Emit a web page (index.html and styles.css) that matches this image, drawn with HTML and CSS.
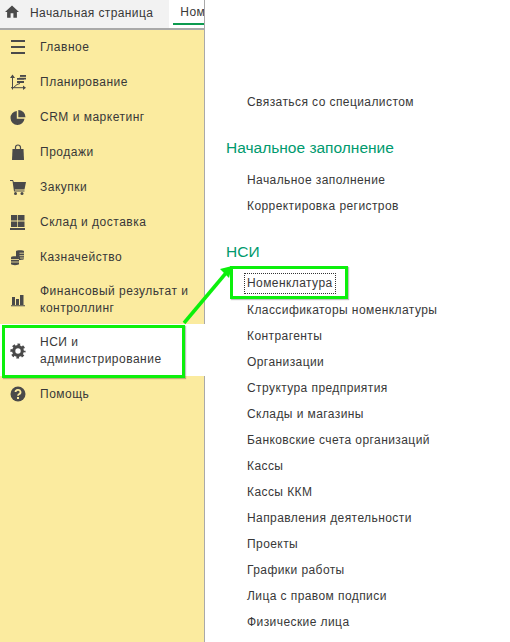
FILE: index.html
```html
<!DOCTYPE html>
<html lang="ru">

<head>
    <meta charset="UTF-8">
    <meta name="viewport" content="width=device-width, initial-scale=1.0">
    <title>Начальная страница</title>
    <link rel="stylesheet" href="styles.css">
</head>

<body>
    <div class="page">
        <div class="left">
            <div class="tabs">
                <svg class="home" viewBox="0 0 16 14"><path d="M8 0 L16 7.500 H13.600 V14 H9.600 V9 H6.400 V14 H2.400 V7.500 H0 Z" /></svg>
                <span class="tab-text">Начальная страница</span>
                <div class="tab-current"><div class="tab-label">Номенклатура</div></div>
            </div>
            <div class="menu">
                <div class="item">
                    <svg class="icon" viewBox="0 0 16 16"><path d="M1 0h14v2H1zM1 6h14v2H1zM1 12h14v2H1z" /></svg>
                    <span>Главное</span>
                </div>
                <div class="item">
                    <svg class="icon" viewBox="0 0 16 16">
                        <path d="M2.500 1.500V14.500M1 12.700H13.500M3 13l4-3.500 3-1" fill="none" stroke="#4a4a4a" stroke-width="1" />
                        <path d="M2.500 -.5L5 3H0zM16 12.700L13 10.500v4.400z" />
                        <path d="M10 0h6v2h-6zM7 3h7v2H7zM9 2.500h7v2H9zM7 6h7v2H7z" />
                        <path d="M7 5.200h7M9 2.300h7" stroke="#fbeb9f" stroke-width=".7" />
                    </svg>
                    <span>Планирование</span>
                </div>
                <div class="item">
                    <svg class="icon" viewBox="0 0 16 16"><path d="M6.800 1a7 7 0 1 0 7.700 7.700H6.800z" /><path d="M8.300 0a7.200 7.200 0 0 1 7.200 7.200H8.300z" /></svg>
                    <span>CRM и маркетинг</span>
                </div>
                <div class="item">
                    <svg class="icon" viewBox="0 0 16 16"><path d="M2.500 4h11L14 15H2z" /><path d="M5.500 6V2.500a2.500 2.500 0 0 1 5 0V6" fill="none" stroke="#4a4a4a" stroke-width="1.200" /></svg>
                    <span>Продажи</span>
                </div>
                <div class="item">
                    <svg class="icon" viewBox="0 0 16 16">
                        <path d="M0 0h3l.8 2H16l-1.500 7.500H4.800L4.900 10.500H14.500V11.500H4L2.500 1H0z" />
                        <circle cx="5.500" cy="13.500" r="1.500" />
                        <circle cx="12" cy="13.500" r="1.500" />
                    </svg>
                    <span>Закупки</span>
                </div>
                <div class="item">
                    <svg class="icon" viewBox="0 0 16 16"><path d="M1 0h6.300v5.500H1zM8 0h6.500v5.500H8zM1 6.500h6.300V12H1zM8 6.500h6.500V12H8zM0 13h15v2H0z" /></svg>
                    <span>Склад и доставка</span>
                </div>
                <div class="item">
                    <svg class="icon" viewBox="0 0 16 16">
                        <path d="M6 1.200C6 0 14 0 14 1.200V8.800C14 10 9 10 9 10V7H6z" />
                        <path d="M1 7.200C1 6 9 6 9 7.200V14C9 15.500 1 15.500 1 14z" />
                        <path d="M9.500 3.200H14M9.500 5.700H14M10 8H14M1 9.500H9M1 12H9" stroke="#fbeb9f" stroke-width=".8" fill="none" />
                    </svg>
                    <span>Казначейство</span>
                </div>
                <div class="item item-two">
                    <svg class="icon" viewBox="0 0 16 16"><path d="M2 5h3v8H2zM6 7h3v6H6zM10 3h3.500v10H10zM1 13.300h14v1H1z" /></svg>
                    <span>Финансовый результат и контроллинг</span>
                </div>
                <div class="item item-active">
                    <svg class="icon" viewBox="0 0 16 16">
                        <circle cx="8" cy="8" r="4.300" fill="none" stroke="#4a4a4a" stroke-width="3.200" />
                        <circle cx="8" cy="8" r="6.300" fill="none" stroke="#4a4a4a" stroke-width="2.600" stroke-dasharray="2.600 2.350" stroke-dashoffset="1.300" />
                    </svg>
                    <span>НСИ и<br>администрирование</span>
                </div>
                <div class="item item-last">
                    <svg class="icon" viewBox="0 0 16 16">
                        <circle cx="8" cy="8" r="7.500" />
                        <path d="M5.500 6a2.500 2.300 0 1 1 3.500 2.200c-.7.400-1 .7-1 1.500" fill="none" stroke="#fbeb9f" stroke-width="1.800" />
                        <path d="M7 11h2v2H7z" fill="#fbeb9f" />
                    </svg>
                    <span>Помощь</span>
                </div>
            </div>
        </div>

        <div class="panel">
            <a class="link">Связаться со специалистом</a>

            <h2>Начальное заполнение</h2>
            <a class="link">Начальное заполнение</a>
            <a class="link">Корректировка регистров</a>

            <h2>НСИ</h2>
            <a class="link"><span class="focused">Номенклатура</span></a>
            <a class="link">Классификаторы номенклатуры</a>
            <a class="link">Контрагенты</a>
            <a class="link">Организации</a>
            <a class="link">Структура предприятия</a>
            <a class="link">Склады и магазины</a>
            <a class="link">Банковские счета организаций</a>
            <a class="link">Кассы</a>
            <a class="link">Кассы ККМ</a>
            <a class="link">Направления деятельности</a>
            <a class="link">Проекты</a>
            <a class="link">Графики работы</a>
            <a class="link">Лица с правом подписи</a>
            <a class="link">Физические лица</a>
        </div>

        <!-- green marks drawn over the screenshot -->
        <div class="mark mark-menu"></div>
        <div class="mark mark-link"></div>
        <svg class="arrow" viewBox="0 0 510 642"><path d="M184 323 L226 273" fill="none" stroke="#0cf00c" stroke-width="3.500" /><path d="M232 266 L220 269 L229 278 Z" fill="#0cf00c" /></svg>
    </div>
</body>

</html>
```

FILE: styles.css
```css
html,
body {
    margin: 0;
    padding: 0;
}

body {
    font-family: "Liberation Sans", Arial, sans-serif;
    font-size: 12px;
    color: #383838;
    background-color: white;
}

.page {
    position: relative;
    display: flex;
    width: 510px;
    height: 642px;
    overflow: hidden;
}

.left {
    width: 204px;
    flex-shrink: 0;
    display: flex;
    flex-direction: column;
    background-color: #fbeb9f;
    border-right: 1px solid #a9a9a9;
}

.tabs {
    height: 28px;
    display: flex;
    align-items: center;
    background-color: #f2f2f2;
    border-bottom: 2px solid #a9a9a9;
    overflow: hidden;
    white-space: nowrap;
}

.home {
    width: 14px;
    height: 13px;
    margin-left: 5px;
    margin-bottom: 5px;
    fill: #4a4a4a;
    flex-shrink: 0;
}

.tab-text {
    margin-left: 11px;
    margin-bottom: 2px;
    letter-spacing: 0.4px;
}

.tab-current {
    align-self: stretch;
    flex-grow: 1;
    margin-left: 16px;
    padding-left: 4px;
    background-color: white;
    overflow: hidden;
}

.tab-label {
    height: 23px;
    line-height: 25px;
    padding-left: 7px;
    border-bottom: 2px solid #0d9b4f;
    letter-spacing: 0.4px;
}

.menu {
    display: flex;
    flex-direction: column;
}

.item {
    height: 35px;
    display: flex;
    align-items: center;
    padding-left: 10px;
    letter-spacing: 0.5px;
    line-height: 17px;
}

.item-two {
    height: 49px;
}

.item-active {
    height: 50px;
    padding-top: 2px;
    margin-right: -1px;
    background-color: white;
}

.item-last {
    height: 34px;
    padding-top: 1px;
}

.icon {
    width: 16px;
    height: 16px;
    fill: #4a4a4a;
    flex-shrink: 0;
    margin-right: 14px;
    overflow: visible;
}

.panel {
    flex-grow: 1;
    padding: 89px 0 0 21px;
}

.panel h2 {
    margin: 21px 0 7px;
    height: 24px;
    line-height: 24px;
    font-size: 15.5px;
    font-weight: normal;
    color: #009a6e;
}

.link {
    display: block;
    height: 26px;
    line-height: 26px;
    margin-left: 21px;
    letter-spacing: 0.42px;
    white-space: nowrap;
}

.focused {
    display: inline-block;
    height: 19px;
    line-height: 19px;
    margin-left: -2px;
    padding: 0 2px;
    outline: 1px dotted #333;
    vertical-align: top;
    margin-top: 3px;
}

.mark {
    position: absolute;
    box-sizing: border-box;
    border: 3px solid #0cf00c;
    box-shadow: 1px 1px 1px rgba(0, 0, 0, 0.25);
}

.mark-menu {
    left: 2px;
    top: 325px;
    width: 183px;
    height: 53px;
}

.mark-link {
    left: 230px;
    top: 266px;
    width: 118px;
    height: 33px;
}

.arrow {
    position: absolute;
    left: 0;
    top: 0;
    width: 510px;
    height: 642px;
}
```
